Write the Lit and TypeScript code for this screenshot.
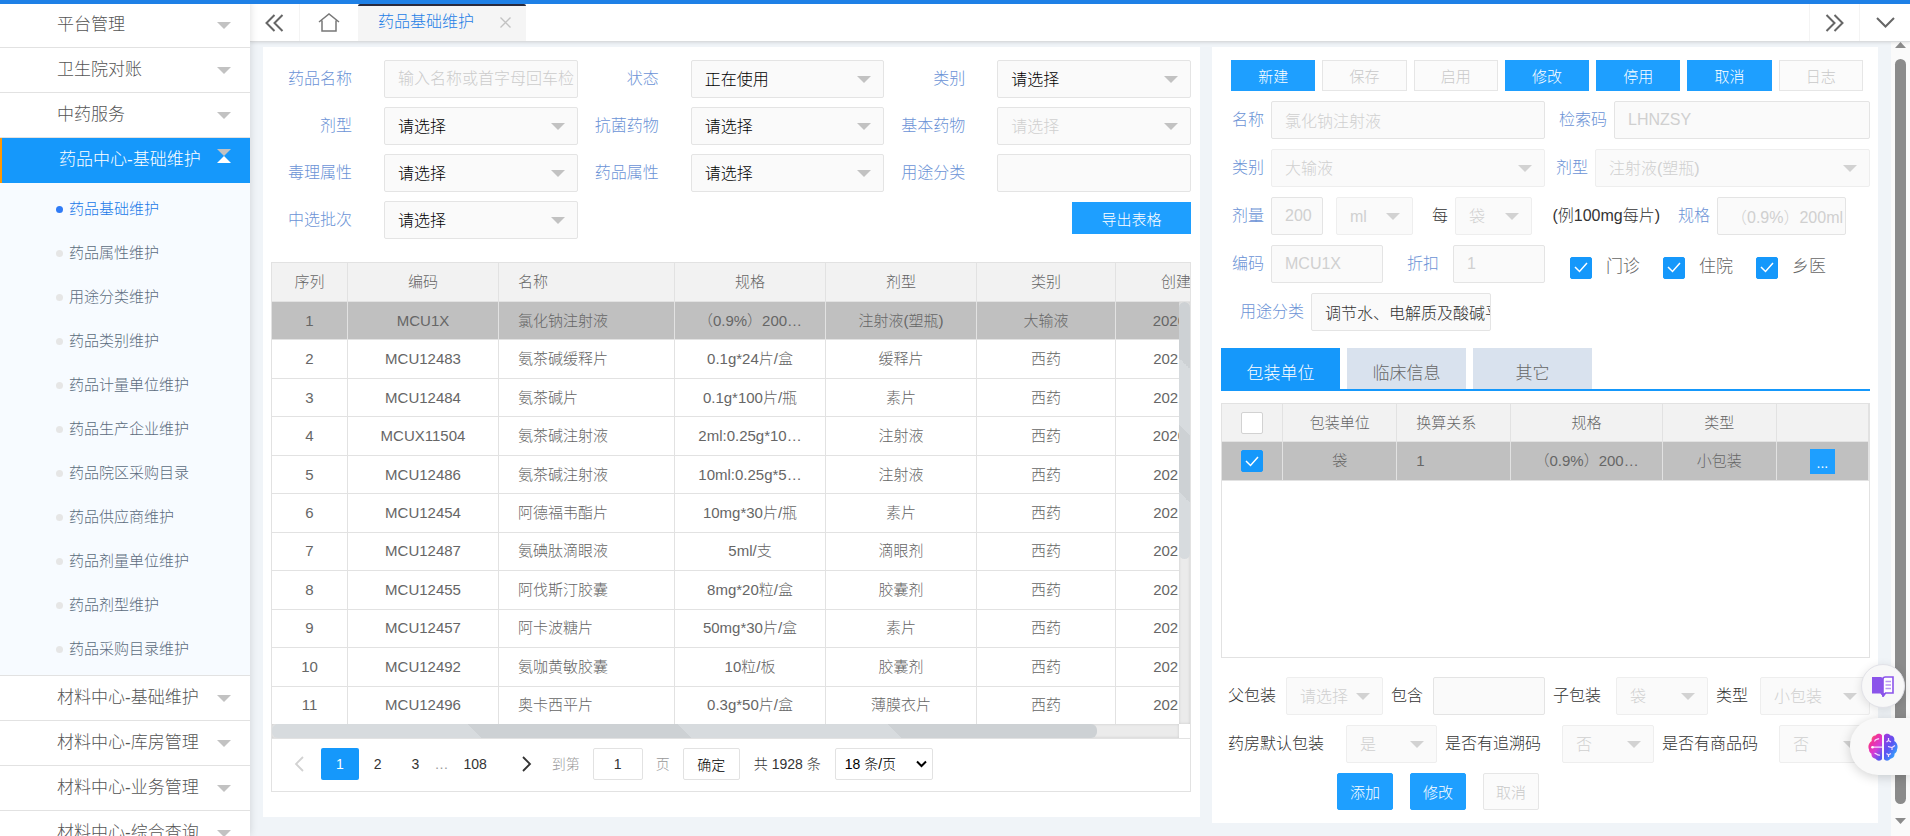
import { LitElement, html, css, svg } from "lit";
import { customElement } from "lit/decorators.js";
import { classMap } from "lit/directives/class-map.js";

const base = css`
  * {
    box-sizing: border-box;
  }
  button,
  input,
  select {
    font-family: inherit;
    font-weight: inherit;
    margin: 0;
    outline: none;
  }
  button {
    cursor: pointer;
    padding: 0;
  }
  a {
    color: inherit;
    text-decoration: none;
  }
  .field {
    display: block;
    width: 100%;
    min-width: 0;
    height: 38px;
    border: 1px solid #e4e4e4;
    border-radius: 2px;
    background-color: #fafafa;
    color: #000;
    font-size: 16px;
    padding: 0 0 0 13px;
    opacity: 1;
  }
  .field::placeholder {
    color: #ccc;
  }
  .field:disabled {
    color: #d0d0d0;
    -webkit-text-fill-color: #d0d0d0;
  }
  select.field {
    appearance: none;
    padding-right: 28px;
    background-image: url("data:image/svg+xml,%3Csvg xmlns='http://www.w3.org/2000/svg' width='14' height='7'%3E%3Cpath d='M0 0h14L7 7z' fill='%23c2c2c2'/%3E%3C/svg%3E");
    background-repeat: no-repeat;
    background-position: right 12px center;
  }
  select.soft {
    border-color: #eee;
    background-image: url("data:image/svg+xml,%3Csvg xmlns='http://www.w3.org/2000/svg' width='14' height='7'%3E%3Cpath d='M0 0h14L7 7z' fill='%23d2d2d2'/%3E%3C/svg%3E");
  }
  .tick {
    appearance: none;
    display: block;
    flex: none;
    width: 22px;
    height: 22px;
    border: 1px solid #d2d2d2;
    border-radius: 2px;
    background-color: #fff;
  }
  .tick:checked {
    border-color: #1598fb;
    background: #1598fb
      url("data:image/svg+xml,%3Csvg xmlns='http://www.w3.org/2000/svg' width='14' height='11'%3E%3Cpath d='M1 5l4.500 4.500L13 1' fill='none' stroke='white' stroke-width='1.500'/%3E%3C/svg%3E")
      no-repeat center;
  }
  table {
    border-collapse: separate;
    border-spacing: 0;
    table-layout: fixed;
  }
  th,
  td {
    border-right: 1px solid #e2e2e2;
    border-bottom: 1px solid #e2e2e2;
    padding: 0 4px;
    font-size: 15px;
    font-weight: inherit;
    color: #666;
    text-align: center;
    overflow: hidden;
    white-space: nowrap;
  }
  th {
    background: #f2f2f2;
  }
  .left {
    text-align: left;
    padding-left: 19px;
  }
  .picked td {
    background: #c0c0c0;
  }
`;

const menuTop = ["平台管理", "卫生院对账", "中药服务"];
const menuSub = [
  "药品基础维护",
  "药品属性维护",
  "用途分类维护",
  "药品类别维护",
  "药品计量单位维护",
  "药品生产企业维护",
  "药品院区采购目录",
  "药品供应商维护",
  "药品剂量单位维护",
  "药品剂型维护",
  "药品采购目录维护",
];
const menuBottom = ["材料中心-基础维护", "材料中心-库房管理", "材料中心-业务管理", "材料中心-综合查询"];

@customElement("side-menu")
class SideMenu extends LitElement {
  static styles = [
    base,
    css`
      :host {
        display: block;
        overflow: hidden;
        background: #fff;
        padding-top: 3px;
        box-shadow: 0 0 8px rgba(0, 0, 0, 0.14);
      }
      .item {
        display: flex;
        align-items: center;
        justify-content: space-between;
        height: 45px;
        padding: 0 19px 0 57px;
        border-bottom: 1px solid #e2e2e2;
        font-size: 17px;
        color: #555;
        white-space: nowrap;
      }
      .item.open {
        padding-left: 57px;
        border-bottom: none;
        border-left: 2px solid #ff9800;
        background: #1598fb;
        color: #fff;
      }
      .arrow {
        display: block;
        flex: none;
        width: 14px;
      }
      .sub {
        list-style: none;
        margin: 0;
        padding: 4px 0;
        background: #f7fbff;
        border-bottom: 1px solid #e2e2e2;
      }
      .sub a {
        display: flex;
        align-items: center;
        gap: 6px;
        height: 44px;
        padding-left: 56px;
        font-size: 15px;
        color: #5b6b7d;
      }
      .sub a::before {
        content: "";
        width: 7px;
        height: 7px;
        border-radius: 50%;
        background: #e6e6e6;
      }
      .sub a.current {
        color: #1a78e8;
      }
      .sub a.current::before {
        background: #2f7bf6;
      }
    `,
  ];
  private row(name: string) {
    return html`<a class="item" href="#"
      >${name}<svg class="arrow" height="7" viewBox="0 0 14 7"><path d="M0 0h14L7 7z" fill="#c2c2c2" /></svg
    ></a>`;
  }
  render() {
    return html`<nav>
      ${menuTop.map((n) => this.row(n))}
      <a class="item open" href="#"
        >药品中心-基础维护<svg class="arrow" height="24" viewBox="0 0 14 24">
          <path d="M0 0h14L7 7z" fill="#c2c2c2" />
          <path d="M0 14h14L7 7z" fill="#fff" /></svg
      ></a>
      <ul class="sub">
        ${menuSub.map((n, i) => html`<li><a href="#" class=${classMap({ current: i === 0 })}>${n}</a></li>`)}
      </ul>
      ${menuBottom.map((n) => this.row(n))}
    </nav>`;
  }
}

@customElement("tab-strip")
class TabStrip extends LitElement {
  static styles = [
    base,
    css`
      :host {
        display: flex;
        height: 38px;
        background: #fff;
        border-bottom: 1px solid #dadcde;
        box-shadow: 0 1px 3px rgba(0, 0, 0, 0.1);
      }
      .icon {
        display: grid;
        place-items: center;
        width: 50px;
        border: 0;
        border-right: 1px solid #f4f4f4;
        background: none;
      }
      .home {
        width: 58px;
        border-right: 0;
      }
      .tab {
        display: flex;
        align-items: center;
        justify-content: space-between;
        width: 168px;
        padding: 0 15px 3px 20px;
        border-radius: 2px 2px 0 0;
        background: #f5f5f5;
        border-top: 2px solid #292a3c;
        font-size: 16px;
        color: #1e80e6;
        white-space: nowrap;
      }
      .close {
        display: grid;
        border: 0;
        background: none;
      }
      .space {
        flex: 1;
        border-right: 1px solid #f4f4f4;
      }
      .icon:last-child {
        border-right: 0;
      }
    `,
  ];
  render() {
    const line = (d: string, w: number, h: number, c = "#666", sw = 2) =>
      svg`<svg width=${w} height=${h} viewBox="0 0 ${w} ${h}" fill="none" stroke=${c} stroke-width=${sw}><path d=${d} /></svg>`;
    return html`
      <button class="icon" aria-label="向左">${line("M9.500 1L1.500 9l8 8M17.500 1l-8 8 8 8", 19, 18)}</button>
      <button class="icon home" aria-label="首页">
        ${line("M1 9L11 1l10 8M4 7.500V18h5M18 7.500V18h-5M8.500 18h5", 22, 19, "#777", 1.5)}
      </button>
      <div class="tab">
        <a href="#">药品基础维护</a>
        <button class="close" aria-label="关闭">${line("M0.500 0.500l10 10M10.500 0.500l-10 10", 11, 11, "#c2c2c2", 1.3)}</button>
      </div>
      <div class="space"></div>
      <button class="icon" aria-label="向右">${line("M1.500 1l8 8-8 8M9.500 1l8 8-8 8", 19, 18)}</button>
      <button class="icon" aria-label="更多">${line("M1 1l8.500 8.500L18 1", 19, 11)}</button>
    `;
  }
}

type Filter = { label: string; value?: string; hint?: string; off?: boolean };
const filters: Filter[] = [
  { label: "药品名称", hint: "输入名称或首字母回车检" },
  { label: "状态", value: "正在使用" },
  { label: "类别", value: "请选择" },
  { label: "剂型", value: "请选择" },
  { label: "抗菌药物", value: "请选择" },
  { label: "基本药物", value: "请选择", off: true },
  { label: "毒理属性", value: "请选择" },
  { label: "药品属性", value: "请选择" },
  { label: "用途分类", hint: "" },
  { label: "中选批次", value: "请选择" },
];

const drugs = [
  ["1", "MCU1X", "氯化钠注射液", "（0.9%）200…", "注射液(塑瓶)", "大输液", "2020-12-01"],
  ["2", "MCU12483", "氨茶碱缓释片", "0.1g*24片/盒", "缓释片", "西药", "2021-01-11"],
  ["3", "MCU12484", "氨茶碱片", "0.1g*100片/瓶", "素片", "西药", "2021-01-11"],
  ["4", "MCUX11504", "氨茶碱注射液", "2ml:0.25g*10…", "注射液", "西药", "2020-12-01"],
  ["5", "MCU12486", "氨茶碱注射液", "10ml:0.25g*5…", "注射液", "西药", "2021-01-11"],
  ["6", "MCU12454", "阿德福韦酯片", "10mg*30片/瓶", "素片", "西药", "2021-01-11"],
  ["7", "MCU12487", "氨碘肽滴眼液", "5ml/支", "滴眼剂", "西药", "2021-01-11"],
  ["8", "MCU12455", "阿伐斯汀胶囊", "8mg*20粒/盒", "胶囊剂", "西药", "2021-01-11"],
  ["9", "MCU12457", "阿卡波糖片", "50mg*30片/盒", "素片", "西药", "2021-01-11"],
  ["10", "MCU12492", "氨咖黄敏胶囊", "10粒/板", "胶囊剂", "西药", "2021-01-11"],
  ["11", "MCU12496", "奥卡西平片", "0.3g*50片/盒", "薄膜衣片", "西药", "2021-01-11"],
];

@customElement("drug-list")
class DrugList extends LitElement {
  static styles = [
    base,
    css`
      :host {
        display: block;
        background: #fff;
        padding: 13px 9px 25px 8px;
        min-width: 0;
      }
      .filters {
        display: grid;
        grid-template-columns: repeat(3, 1fr);
        row-gap: 9px;
      }
      .cell {
        display: grid;
        grid-template-columns: 113px 1fr;
        align-items: center;
      }
      .cell label {
        padding-right: 32px;
        text-align: right;
        font-size: 16px;
        color: #6b93d6;
      }
      .export {
        grid-column: 3;
        justify-self: end;
        width: 119px;
        height: 32px;
        margin-top: 1px;
        border: 0;
        background: #1e9fff;
        color: #fff;
        font-size: 15px;
      }
      .grid {
        margin-top: 23px;
        border: 1px solid #e2e2e2;
      }
      .head {
        overflow: hidden;
      }
      .head th {
        height: 39px;
      }
      .body {
        display: grid;
        grid-template-columns: minmax(0, 1fr) 11px;
        grid-template-rows: 422px 14px;
      }
      .view {
        overflow: hidden;
      }
      .view table {
        height: 423px;
      }
      .seq {
        width: 76px;
      }
      .mid {
        width: 151px;
      }
      .name {
        width: 176px;
      }
      .kind {
        width: 139px;
      }
      .list {
        width: 995px;
      }
      .track {
        background: #ebebeb;
        box-shadow: inset 0 0 3px rgba(0, 0, 0, 0.14);
      }
      .thumb {
        border-radius: 6px;
        background: linear-gradient(45deg, #d7dbde 25%, #cdd1d4 25% 50%, #d7dbde 50% 75%, #cdd1d4 75%);
      }
      .down .thumb {
        height: 61%;
      }
      .across .thumb {
        width: 91%;
        height: 100%;
      }
      .pager {
        display: flex;
        align-items: center;
        height: 53px;
        padding: 0 5px 2px;
        border-top: 1px solid #e2e2e2;
        font-size: 14px;
        color: #333;
      }
      .pager > * {
        flex: none;
      }
      .page {
        display: grid;
        place-items: center;
        height: 32px;
        padding: 0 15px;
        border: 0;
        background: none;
        font-size: 14px;
        color: #333;
      }
      .page.now {
        border-radius: 2px;
        background: #1598fb;
        color: #fff;
      }
      .step {
        width: 44px;
        padding: 0;
      }
      .step.next {
        width: 50px;
      }
      .muted {
        color: #999;
      }
      .goto {
        display: flex;
        align-items: center;
        gap: 13px;
        color: #999;
      }
      .box {
        height: 32px;
        border: 1px solid #e2e2e2;
        border-radius: 2px;
        background: #fff;
        font-size: 14px;
        color: #000;
      }
      .num {
        width: 50px;
        color: #333;
        text-align: center;
      }
      .ok {
        width: 57px;
        margin-left: 13px;
      }
      .total {
        margin: 0 14px;
      }
      .size {
        width: 98px;
        padding: 0 24px 0 9px;
        appearance: none;
        background: #fff
          url("data:image/svg+xml,%3Csvg xmlns='http://www.w3.org/2000/svg' width='11' height='8'%3E%3Cpath d='M1 1.500l4.500 4.500L10 1.500' fill='none' stroke='black' stroke-width='2'/%3E%3C/svg%3E")
          no-repeat right 5px center;
      }
    `,
  ];
  private cols() {
    return html`<colgroup>
      <col class="seq" /><col class="mid" /><col class="name" /><col class="mid" /><col class="mid" /><col
        class="kind"
      /><col class="mid" />
    </colgroup>`;
  }
  render() {
    return html`
      <form class="filters">
        ${filters.map(
          (f, i) => html`<div class="cell">
            <label for="f${i}">${f.label}</label>
            ${f.value
              ? html`<select id="f${i}" class="field" ?disabled=${f.off}>
                  <option>${f.value}</option>
                </select>`
              : html`<input id="f${i}" class="field" placeholder=${f.hint ?? ""} />`}
          </div>`,
        )}
        <button type="button" class="export">导出表格</button>
      </form>
      <section class="grid">
        <div class="head">
          <table class="list">
            ${this.cols()}
            <thead>
              <tr>
                ${["序列", "编码", "名称", "规格", "剂型", "类别", "创建时间"].map(
                  (h, i) => html`<th class=${classMap({ left: i === 2 })}>${h}</th>`,
                )}
              </tr>
            </thead>
          </table>
        </div>
        <div class="body">
          <div class="view">
            <table class="list">
              ${this.cols()}
              <tbody>
                ${drugs.map(
                  (d, r) => html`<tr class=${classMap({ picked: r === 0 })}>
                    ${d.map((c, i) => html`<td class=${classMap({ left: i === 2 })}>${c}</td>`)}
                  </tr>`,
                )}
              </tbody>
            </table>
          </div>
          <div class="track down"><div class="thumb"></div></div>
          <div class="track across"><div class="thumb"></div></div>
        </div>
        <div class="pager">
          <button class="page step" aria-label="上一页">
            <svg width="10" height="16" fill="none" stroke="#d2d2d2" stroke-width="1.800"><path d="M9 1L2 8l7 7" /></svg>
          </button>
          <button class="page now">1</button>
          <button class="page">2</button>
          <button class="page">3</button>
          <span class="muted">…</span>
          <button class="page">108</button>
          <button class="page step next" aria-label="下一页">
            <svg width="10" height="16" fill="none" stroke="#333" stroke-width="1.800"><path d="M1 1l7 7-7 7" /></svg>
          </button>
          <label class="goto">到第<input class="box num" value="1" />页</label>
          <button class="box ok">确定</button>
          <span class="total">共 1928 条</span>
          <select class="box size" aria-label="每页条数">
            <option>18 条/页</option>
          </select>
        </div>
      </section>
    `;
  }
}

@customElement("drug-detail")
class DrugDetail extends LitElement {
  static styles = [
    base,
    css`
      :host {
        display: block;
        background: #fff;
        padding: 13px 8px;
        min-width: 0;
      }
      .actions {
        display: grid;
        grid-template-columns: repeat(7, 1fr);
        gap: 7px;
        padding: 0 7px 0 11px;
        margin-bottom: 10px;
      }
      .btn {
        height: 31px;
        border: 1px solid #1e9fff;
        background: #1e9fff;
        color: #fff;
        font-size: 15px;
      }
      .btn:disabled {
        border-color: #e6e6e6;
        background: #fbfbfb;
        color: #c9c9c9;
      }
      .row {
        display: grid;
        align-items: center;
        margin-bottom: 10px;
        padding-left: 8px;
        font-size: 16px;
        color: #333;
        white-space: nowrap;
      }
      .row > label,
      .row > span {
        padding-right: 7px;
        text-align: right;
      }
      .row > label {
        color: #6b93d6;
      }
      .name {
        grid-template-columns: 43px 274fr 69px 256fr;
      }
      .type {
        grid-template-columns: 43px 274fr 50px 275fr;
      }
      .dose {
        grid-template-columns: 43px 52fr 13px 77fr 42px 77fr 135px 50px 129fr 24px;
      }
      .dose > select:nth-of-type(1) {
        grid-column: 4;
      }
      .code {
        grid-template-columns: 43px 112fr 70px 92fr 325fr;
      }
      .code > label:nth-of-type(2) {
        padding-right: 14px;
      }
      .usage {
        grid-template-columns: 83px 180fr 379fr;
        margin-bottom: 17px;
      }
      .usage .field {
        color: #333;
      }
      .checks {
        display: flex;
        gap: 23px;
        padding: 7px 0 0 25px;
      }
      .checks label {
        display: flex;
        align-items: center;
        gap: 14px;
        font-size: 17px;
        color: #666;
      }
      .tabs {
        display: flex;
        gap: 7px;
        margin-left: 1px;
        border-bottom: 2px solid #1598fb;
      }
      .tabs button {
        width: 119px;
        height: 41px;
        padding-top: 6px;
        border: 0;
        background: #d9e2ee;
        color: #666;
        font-size: 17px;
      }
      .tabs .on {
        background: #1598fb;
        color: #fff;
      }
      .packs {
        min-height: 255px;
        margin: 12px 0 19px 1px;
        border: 1px solid #e2e2e2;
      }
      .packs table {
        width: 100%;
      }
      .packs th {
        height: 38px;
      }
      .packs td {
        height: 39px;
      }
      .packs .tick {
        margin: 0 auto;
      }
      .c1 {
        width: 61px;
      }
      .c2 {
        width: 114px;
      }
      .c3 {
        width: 151px;
      }
      .c4 {
        width: 92px;
      }
      .more {
        display: block;
        width: 25px;
        height: 25px;
        margin: 0 auto;
        padding-top: 4px;
        border: 0;
        background: #1e9fff;
        color: #fff;
        font-size: 14px;
      }
      .pack {
        padding-left: 0;
      }
      .pack > label {
        padding: 0 0 0 8px;
        color: #333;
        text-align: left;
      }
      .parent {
        grid-template-columns: 66px 97fr 50px 112fr 71px 92fr 52px 110fr;
      }
      .flags {
        grid-template-columns: 126px 91fr 125px 92fr 125px 91fr;
      }
      .foot {
        display: flex;
        gap: 17px;
        padding-left: 117px;
      }
      .foot .btn {
        width: 56px;
        height: 37px;
        border-radius: 2px;
      }
    `,
  ];
  private pick(id: string, value: string) {
    return html`<select id=${id} class="field soft" disabled>
      <option>${value}</option>
    </select>`;
  }
  private text(id: string, value: string, off = true) {
    return html`<input id=${id} class="field" .value=${value} ?disabled=${off} />`;
  }
  render() {
    const actions: [string, boolean][] = [
      ["新建", true],
      ["保存", false],
      ["启用", false],
      ["修改", true],
      ["停用", true],
      ["取消", true],
      ["日志", false],
    ];
    return html`
      <div class="actions">
        ${actions.map(([n, on]) => html`<button class="btn" ?disabled=${!on}>${n}</button>`)}
      </div>
      <div class="row name">
        <label for="name">名称</label>${this.text("name", "氯化钠注射液")}
        <label for="py">检索码</label>${this.text("py", "LHNZSY")}
      </div>
      <div class="row type">
        <label for="kind">类别</label>${this.pick("kind", "大输液")}
        <label for="form">剂型</label>${this.pick("form", "注射液(塑瓶)")}
      </div>
      <div class="row dose">
        <label for="dose">剂量</label>${this.text("dose", "200")}${this.pick("unit", "ml")}
        <span>每</span>${this.pick("per", "袋")}
        <span>(例100mg每片)</span>
        <label for="spec">规格</label>${this.text("spec", "（0.9%）200ml")}
      </div>
      <div class="row code">
        <label for="code">编码</label>${this.text("code", "MCU1X")}
        <label for="off">折扣</label>${this.text("off", "1")}
        <div class="checks">
          ${["门诊", "住院", "乡医"].map(
            (n) => html`<label><input type="checkbox" class="tick" checked />${n}</label>`,
          )}
        </div>
      </div>
      <div class="row usage">
        <label for="usage">用途分类</label>${this.text("usage", "调节水、电解质及酸碱平衡药", false)}
      </div>
      <div class="tabs">
        <button class="on">包装单位</button>
        <button>临床信息</button>
        <button>其它</button>
      </div>
      <div class="packs">
        <table>
          <colgroup>
            <col class="c1" /><col class="c2" /><col class="c2" /><col class="c3" /><col class="c2" /><col class="c4" />
          </colgroup>
          <thead>
            <tr>
              <th><input type="checkbox" class="tick" aria-label="全选" /></th>
              <th>包装单位</th>
              <th class="left">换算关系</th>
              <th>规格</th>
              <th>类型</th>
              <th></th>
            </tr>
          </thead>
          <tbody>
            <tr class="picked">
              <td><input type="checkbox" class="tick" aria-label="选择" checked /></td>
              <td>袋</td>
              <td class="left">1</td>
              <td>（0.9%）200…</td>
              <td>小包装</td>
              <td><button class="more">...</button></td>
            </tr>
          </tbody>
        </table>
      </div>
      <div class="row pack parent">
        <label for="pa">父包装</label>${this.pick("pa", "请选择")} <label for="has">包含</label>${this.text("has", "")}
        <label for="ch">子包装</label>${this.pick("ch", "袋")} <label for="ty">类型</label>${this.pick("ty", "小包装")}
      </div>
      <div class="row pack flags">
        <label for="de">药房默认包装</label>${this.pick("de", "是")}
        <label for="tr">是否有追溯码</label>${this.pick("tr", "否")}
        <label for="go">是否有商品码</label>${this.pick("go", "否")}
      </div>
      <div class="foot">
        <button class="btn">添加</button>
        <button class="btn">修改</button>
        <button class="btn" disabled>取消</button>
      </div>
    `;
  }
}

@customElement("app-root")
class AppRoot extends LitElement {
  static styles = [
    base,
    css`
      :host {
        position: relative;
        display: grid;
        grid-template-columns: 250px minmax(0, 1fr);
        height: 100vh;
        overflow: hidden;
        background: #f0f4f8;
        font-family: "Liberation Sans", "Noto Sans CJK SC", sans-serif;
        font-weight: 300;
        line-height: 1.2;
      }
      .bar {
        position: absolute;
        z-index: 3;
        inset: 0 0 auto;
        height: 4px;
        background: #1e80e6;
      }
      side-menu {
        z-index: 2;
        min-height: 0;
      }
      main {
        display: flex;
        flex-direction: column;
        min-height: 0;
        padding-top: 4px;
      }
      tab-strip {
        flex: none;
        z-index: 1;
      }
      .stage {
        display: grid;
        grid-template-columns: minmax(0, 1fr) 19px;
        flex: 1;
        min-height: 0;
      }
      .panels {
        display: grid;
        grid-template-columns: 937fr 666fr;
        gap: 12px;
        align-items: start;
        padding: 5px 13px 0;
      }
      .scroll {
        display: flex;
        flex-direction: column;
        align-items: center;
        gap: 11px;
        padding: 0 0 12px;
        background: #fafafa;
      }
      .scroll svg {
        flex: none;
      }
      .scroll i {
        flex: 1;
        width: 11px;
        margin-bottom: 3px;
        border-radius: 6px;
        background: #8b8b8b;
      }
      .book {
        position: absolute;
        z-index: 4;
        right: 5px;
        bottom: 128px;
        display: grid;
        place-items: center;
        width: 44px;
        height: 44px;
        border: 1px solid #e2e2e8;
        border-radius: 50%;
        background: #f8f8f8;
        box-shadow: 0 2px 10px rgba(0, 0, 0, 0.12);
      }
      .brain {
        position: absolute;
        z-index: 4;
        right: 0;
        bottom: 61px;
        display: grid;
        align-items: center;
        width: 60px;
        height: 57px;
        padding-left: 18px;
        border: 0;
        border-radius: 28px 0 0 28px;
        background: #f9f9f9;
        box-shadow: 0 2px 12px rgba(0, 0, 0, 0.18);
      }
    `,
  ];
  render() {
    return html`
      <div class="bar"></div>
      <side-menu></side-menu>
      <main>
        <tab-strip></tab-strip>
        <div class="stage">
          <div class="panels">
            <drug-list></drug-list>
            <drug-detail></drug-detail>
          </div>
          <div class="scroll" aria-hidden="true">
            <svg width="11" height="6"><path d="M0 6L5.500 0 11 6z" fill="#8b8b8b" /></svg>
            <i></i>
            <svg width="11" height="6"><path d="M0 0h11L5.500 6z" fill="#8b8b8b" /></svg>
          </div>
        </div>
      </main>
      <button class="book" aria-label="阅读">
        <svg width="22" height="21" viewBox="0 0 22 21">
          <path d="M0 1h8.500Q11 1 11 3v17.500L8.500 17.500H0z" fill="#8b54ea" />
          <path d="M11 20.500V3Q11 1 13.500 1H21v16h-7.500z" fill="#fff" stroke="#8b54ea" stroke-width="1.600" />
          <path d="M13.500 5.500H19M13.500 9H19M13.500 12.500H19" stroke="#b998f2" stroke-width="1.600" />
          <path d="M8.500 17H13.500L11 20.500z" fill="#8b54ea" />
        </svg>
      </button>
      <button class="brain" aria-label="智能助手">
        <svg width="30" height="28" viewBox="0 0 30 28">
          <defs>
            <linearGradient id="l" x1="0" y1="0" x2="0.7" y2="1">
              <stop offset="0" stop-color="#ff9d2e" />
              <stop offset="0.35" stop-color="#f0319f" />
              <stop offset="0.65" stop-color="#d63bd6" />
              <stop offset="1" stop-color="#5b55f0" />
            </linearGradient>
            <linearGradient id="r" x1="0" y1="0" x2="0.8" y2="1">
              <stop offset="0" stop-color="#a835dc" />
              <stop offset="0.5" stop-color="#5a55f2" />
              <stop offset="1" stop-color="#2bb5ff" />
            </linearGradient>
          </defs>
          <path
            d="M14 2.500C13 0 9 0 7.500 2.500 4.500 2.500 3 5.500 3.800 8 .8 9.500 -.4 13.500 1 16.500 1 18.500 2 20 3.500 20.800 3 24 5.500 25.500 7.500 25.800 9.500 28.600 13 28 14 26z"
            fill="url(#l)"
          />
          <path
            d="M16 2.500C17 0 21 0 22.500 2.500 25.500 2.500 27 5.500 26.200 8 29.200 9.500 30.400 13.500 29 16.500 29 18.500 28 20 26.500 20.800 27 24 24.500 25.500 22.500 25.800 20.500 28.600 17 28 16 26z"
            fill="url(#r)"
          />
          <path
            d="M6.500 8.500C7 6 9.500 6.500 11 5.500M4 14.200H14M6.500 20.500C8 19.500 9 23 12 22M18.500 9L20.500 7.500 23 9M20.500 7.500V5M20 13.500L24 14.500 27 12.500M24 14.500V17M18.500 20.500L20.500 22 23 20.500M20.500 22V24"
            fill="none"
            stroke="#f6dcff"
            stroke-width="1.200"
          />
          <circle cx="4.500" cy="14.200" r="1.300" fill="#fff" />
        </svg>
      </button>
    `;
  }
}
